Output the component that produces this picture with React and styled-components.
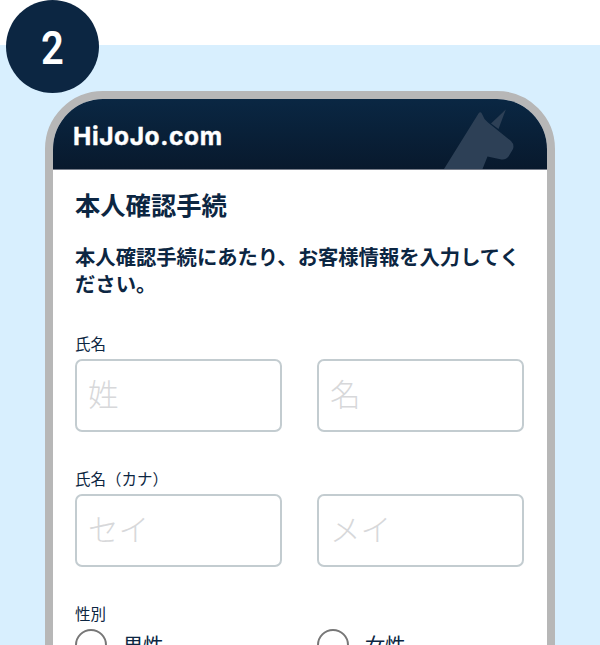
import styled, { createGlobalStyle } from 'styled-components';

const nameFields = [
    { label: '氏名', hints: ['姓', '名'] },
    { label: '氏名（カナ）', hints: ['セイ', 'メイ'] },
];

const App = () => {
    return (
        <Page>
            <GlobalStyle/>
            <Panel>
                <Phone>
                    <Header>
                        <Logo>HiJoJo.com</Logo>
                        <Unicorn viewBox='0 0 72 60' aria-hidden='true'>
                            <path d='M0 60L34.5 4.5Q36.3 1.8 37.8 4.5L40.5 10L44 13.5L67 32Q70.5 35.5 69 40L64.500 47.500Q62 51 57.500 50.500L43.500 47.500L38.500 60Z'/>
                            <path d='M61.8 .5L54.500 20L47 14.500Z'/>
                        </Unicorn>
                    </Header>
                    <Content>
                        <Title>本人確認手続</Title>
                        <Lead>本人確認手続にあたり、お客様情報を入力してください。</Lead>
                        {nameFields.map((field) => (
                            <Field key={field.label}>
                                <Label>{field.label}</Label>
                                <Pair>
                                    {field.hints.map((hint) => <Input key={hint} placeholder={hint} aria-label={hint}/>)}
                                </Pair>
                            </Field>
                        ))}
                        <Field>
                            <Label>性別</Label>
                            <Pair>
                                <Choice><Radio/>男性</Choice>
                                <Choice><Radio/>女性</Choice>
                            </Pair>
                        </Field>
                    </Content>
                </Phone>
            </Panel>
            <Step><StepNumber>2</StepNumber></Step>
        </Page>
    )
}

const GlobalStyle = createGlobalStyle`
    body{
        margin: 0;
        background-color: #ffffff;
    }
    *{
        box-sizing: border-box;
    }
`

const Page = styled.div`
    position: relative;
    width: 600px;
    height: 645px;
    padding-top: 45px;
    overflow: hidden;
    color: #0c2642;
    font-family: 'Noto Sans CJK JP', sans-serif;
`

const Panel = styled.div`
    height: 600px;
    padding: 46px 45px 0;
    background-color: #d8effe;
    overflow: hidden;
`

const Phone = styled.div`
    height: 700px;
    border: 8px solid #b7b7b7;
    border-radius: 58px;
    background-color: #ffffff;
    overflow: hidden;
`

const Header = styled.div`
    display: flex;
    align-items: flex-end;
    justify-content: space-between;
    height: 71px;
    padding: 0 31px 0 20px;
    background: linear-gradient(#0a2743, #08192d);
    border-bottom: 1px solid #777d8a;
`

const Logo = styled.div`
    height: 50px;
    line-height: 35px;
    color: #ffffff;
    font-family: Inter, sans-serif;
    font-size: 24.500px;
    font-weight: 700;
    letter-spacing: 0.6px;
    -webkit-text-stroke: 0.4px #ffffff;
`

const Unicorn = styled.svg`
    width: 72px;
    height: 60px;
    fill: #2d4056;
`

const Content = styled.div`
    padding: 15px 22px 0;
`

const Title = styled.h1`
    margin: 0;
    font-size: 25.3px;
    font-weight: 700;
    line-height: 38px;
`

const Lead = styled.p`
    margin: 20px 0 36px;
    width: 452px;
    font-size: 20.32px;
    font-weight: 700;
    line-height: 26.500px;
`

const Field = styled.div`
    height: 135px;
`

const Label = styled.div`
    height: 25px;
    margin-bottom: 2px;
    font-size: 15.500px;
    line-height: 22px;
`

const Pair = styled.div`
    display: grid;
    grid-template-columns: 207px 207px;
    column-gap: 35px;
`

const Input = styled.input`
    width: 100%;
    height: 73px;
    padding: 0 12px 5px 11px;
    border: 2px solid #c3ccd0;
    border-radius: 7px;
    outline: none;
    background-color: #ffffff;
    color: #0c2642;
    font-family: inherit;
    font-size: 30.600px;
    font-weight: 300;
    &::placeholder{
        color: #d7d8da;
        opacity: 1;
    }
`

const Choice = styled.div`
    display: flex;
    align-items: center;
    height: 32px;
    gap: 16px;
    font-size: 20.25px;
    line-height: 30px;
`

const Radio = styled.span`
    width: 32px;
    height: 32px;
    border: 2px solid #777777;
    border-radius: 50%;
`

const Step = styled.div`
    position: absolute;
    top: 0;
    left: 6px;
    display: flex;
    align-items: center;
    justify-content: center;
    width: 93px;
    height: 93px;
    border-radius: 50%;
    background-color: #0c2642;
`

const StepNumber = styled.span`
    padding-top: 2px;
    color: #ffffff;
    font-family: Roboto, sans-serif;
    font-size: 47px;
    font-weight: 600;
    line-height: 1;
    transform: scaleX(0.85);
`

export default App
